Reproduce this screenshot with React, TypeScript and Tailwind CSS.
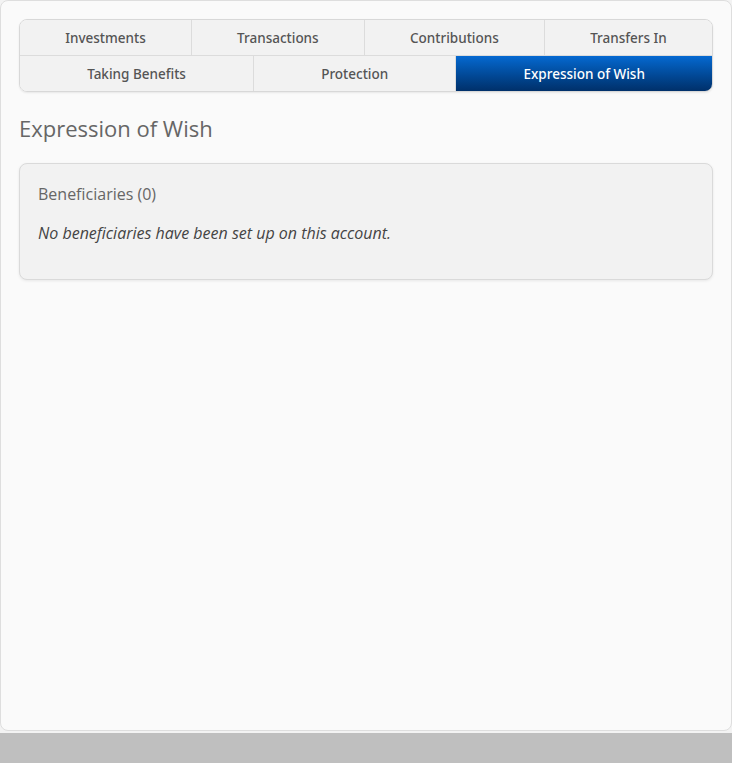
import React from 'react';

const rows: string[][] = [
  ['Investments', 'Transactions', 'Contributions', 'Transfers In'],
  ['Taking Benefits', 'Protection', 'Expression of Wish'],
];

const activeTab = 'Expression of Wish';

const TabBar: React.FC = () => (
  <div className="rounded-lg border border-[#d8d8d8] overflow-hidden shadow-[0_1px_2px_rgba(0,0,0,0.08)] font-['Noto_Sans',sans-serif]">
    {rows.map((row, i) => (
      <div key={i} className={`flex ${i === 0 ? 'border-b border-[#dcdcdc]' : ''}`}>
        {row.map((tab, j) => {
          const active = tab === activeTab;
          return (
            <div
              key={tab}
              className={`flex-auto h-[35px] pt-[2px] flex items-center justify-center text-[13.5px] font-medium ${
                j > 0 ? 'border-l border-[#dcdcdc]' : ''
              } ${
                active
                  ? 'bg-gradient-to-b from-[#0569d1] to-[#00306a] text-white'
                  : 'bg-[#f2f2f2] text-[#555555]'
              }`}
            >
              {tab}
            </div>
          );
        })}
      </div>
    ))}
  </div>
);

export default function App() {
  return (
    <div className="h-[763px] bg-[#bfbfbf] font-['Open_Sans',sans-serif]">
      <div className="bg-[#f3f3f3] pb-[2px]">
        <div className="h-[731px] rounded-lg border border-[#dedede] bg-[#fafafa] px-[18px] pt-[18px]">
          <TabBar />
          <h1 className="mt-[21px] text-[22px] leading-[30px] text-[#666666]">Expression of Wish</h1>
          <div className="mt-[20px] rounded-lg border border-[#dadada] bg-[#f2f2f2] px-[18px] pt-[18px] pb-[34px] shadow-[0_1px_3px_rgba(0,0,0,0.08)]">
            <h2 className="text-base leading-6 text-[#666666]">Beneficiaries (0)</h2>
            <p className="mt-[15px] text-base leading-6 italic text-[#444444]">
              No beneficiaries have been set up on this account.
            </p>
          </div>
        </div>
      </div>
    </div>
  );
}
